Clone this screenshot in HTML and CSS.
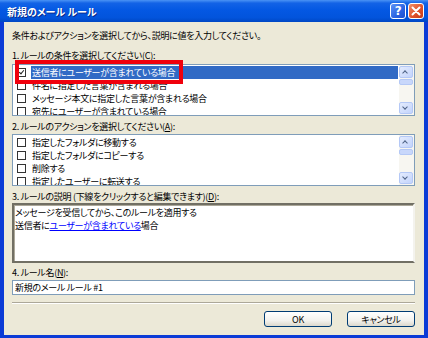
FILE: index.html
```html
<!doctype html>
<html lang="ja">
  <head>
    <meta charset="UTF-8" />
    <title>新規のメール ルール</title>
    <link rel="stylesheet" href="styles.css">
  </head>
  <body>
    <div class="window">
      <div class="titlebar">
        <span class="title">新規のメール ルール</span>
        <div class="title-buttons">
          <span class="tb-btn help">?</span>
          <span class="tb-btn close">
            <svg width="10" height="10" viewBox="0 0 10 10"><path d="M1.5 1.5 L8.5 8.5 M8.5 1.5 L1.5 8.5" stroke="#fff" stroke-width="2" stroke-linecap="round"/></svg>
          </span>
        </div>
      </div>
      <div class="client">
        <div class="intro">条件およびアクションを選択してから、説明に値を入力してください。</div>

        <div class="label label-1">1. ルールの条件を選択してください(<u>C</u>):</div>
        <div class="listbox">
          <ul class="items">
            <li class="selected"><span class="check checked"></span><span class="text">送信者にユーザーが含まれている場合</span></li>
            <li><span class="check"></span><span class="text">件名に指定した言葉が含まれる場合</span></li>
            <li><span class="check"></span><span class="text">メッセージ本文に指定した言葉が含まれる場合</span></li>
            <li><span class="check"></span><span class="text">宛先にユーザーが含まれている場合</span></li>
          </ul>
          <div class="scrollbar">
            <span class="sb-btn up"></span>
            <span class="sb-thumb"></span>
            <span class="sb-track"></span>
            <span class="sb-btn down"></span>
          </div>
          <div class="red-frame"></div>
        </div>

        <div class="label label-2">2. ルールのアクションを選択してください(<u>A</u>):</div>
        <div class="listbox">
          <ul class="items">
            <li><span class="check"></span><span class="text">指定したフォルダに移動する</span></li>
            <li><span class="check"></span><span class="text">指定したフォルダにコピーする</span></li>
            <li><span class="check"></span><span class="text">削除する</span></li>
            <li><span class="check"></span><span class="text">指定したユーザーに転送する</span></li>
          </ul>
          <div class="scrollbar">
            <span class="sb-btn up"></span>
            <span class="sb-thumb"></span>
            <span class="sb-track"></span>
            <span class="sb-btn down"></span>
          </div>
        </div>

        <div class="label label-3">3. ルールの説明 (下線をクリックすると編集できます)(<u>D</u>):</div>
        <div class="description">
          <div>メッセージを受信してから、このルールを適用する</div>
          <div>送信者に<a href="#" class="rule-link">ユーザーが含まれている</a>場合</div>
        </div>

        <div class="label label-4">4. ルール名(<u>N</u>):</div>
        <div class="name-input">新規のメール ルール #1</div>

        <div class="separator"></div>

        <div class="buttons">
          <span class="btn">OK</span>
          <span class="btn">キャンセル</span>
        </div>
      </div>
    </div>
  </body>
</html>
```

FILE: styles.css
```css
body {
  margin: 0;
  font-family: "Noto Sans CJK JP", "Noto Sans", sans-serif;
  font-size: 9px;
  font-feature-settings: "palt";
  letter-spacing: -0.3px;
  color: #000;
  background: #ece9d8;
}
.window {
  width: 428px;
  height: 338px;
  display: flex;
  flex-direction: column;
}
.titlebar {
  height: 22px;
  display: flex;
  align-items: center;
  justify-content: space-between;
  padding: 0 4px 0 7px;
  background: linear-gradient(to bottom, #4a93f5 0%, #1363e6 14%, #0458e3 45%, #0254dc 80%, #0047c4 100%);
}
.title {
  color: #fff;
  font-weight: bold;
  font-size: 10px;
  letter-spacing: 0;
  text-shadow: 1px 1px 0 #0a2a8a;
}
.title-buttons {
  display: flex;
  gap: 2px;
}
.tb-btn {
  width: 16px;
  height: 16px;
  box-sizing: border-box;
  border: 1px solid #fff;
  border-radius: 3px;
  display: flex;
  align-items: center;
  justify-content: center;
  color: #fff;
  font-family: "DejaVu Sans", sans-serif;
  font-weight: bold;
  font-size: 12px;
}
.help {
  background: linear-gradient(to bottom right, #5c93f7, #2a63e2 60%, #1b4fcf);
}
.close {
  background: linear-gradient(to bottom right, #f0906a, #e0532c 55%, #c43a18);
}
.client {
  flex: 1;
  background: #ece9d8;
  border: 4px solid #0b3bd6;
  border-top: none;
  border-bottom-width: 3px;
  padding: 7px 9px 0 8px;
}
.intro,
.label {
  line-height: 13px;
  white-space: nowrap;
}
.label-1 { margin: 7px 0 2px; }
.label-2 { margin: 4px 0 1px; }
.label-3 { margin: 4px 0 0; }
.label-4 { margin: 3px 0 1px; }
.listbox {
  position: relative;
  height: 52px;
  box-sizing: border-box;
  border: 1px solid #7f9db9;
  background: #fff;
  display: flex;
}
.items {
  flex: 1;
  list-style: none;
  margin: 0;
  padding: 1px 0 0;
  overflow: hidden;
}
.items li {
  height: 13px;
  display: flex;
  align-items: center;
  padding-left: 4px;
}
.check {
  width: 9px;
  height: 9px;
  box-sizing: border-box;
  border: 1px solid #333;
  background: #fff;
  margin-right: 5px;
  position: relative;
}
.check.checked::after {
  content: "";
  position: absolute;
  left: 2px;
  top: 0;
  width: 2px;
  height: 4px;
  border: solid #222;
  border-width: 0 1.5px 1.5px 0;
  transform: rotate(40deg);
}
.text {
  flex: 1;
  height: 13px;
  line-height: 13px;
  padding-left: 1px;
  margin-right: 1px;
  white-space: nowrap;
}
.selected .text {
  background: #316ac5;
  color: #fff;
}
.scrollbar {
  width: 14px;
  display: flex;
  flex-direction: column;
  padding: 1px 1px 1px 0;
  background: #f7f6f1;
}
.sb-btn {
  height: 12px;
  box-sizing: border-box;
  border: 1px solid #b4c8f6;
  border-radius: 2px;
  background: linear-gradient(to bottom right, #e3ebfd, #c3d4fc);
  position: relative;
}
.sb-btn::after {
  content: "";
  position: absolute;
  left: 3px;
  width: 3px;
  height: 3px;
  border: solid #4d6185;
  border-width: 1.5px 1.5px 0 0;
}
.sb-btn.up::after {
  top: 4px;
  transform: rotate(-45deg);
}
.sb-btn.down::after {
  top: 2px;
  transform: rotate(135deg);
}
.sb-thumb {
  height: 6px;
  margin-top: 1px;
  border-radius: 2px;
  background: #c8d7fb;
  border: 1px solid #b4c8f6;
  box-sizing: border-box;
}
.sb-track {
  flex: 1;
}
.red-frame {
  position: absolute;
  left: 2px;
  top: -5px;
  width: 168px;
  height: 24px;
  box-sizing: border-box;
  border: 4px solid #f0000c;
}
.description {
  height: 60px;
  box-sizing: border-box;
  background: #fff;
  border: 2px solid;
  border-color: #716f64 #f4f3ee #716f64 #716f64;
  box-shadow: inset 1px 1px 0 #aca899;
  padding: 1px 0 0 1px;
  line-height: 13px;
}
.rule-link {
  color: #0000ff;
}
.name-input {
  height: 15px;
  box-sizing: border-box;
  border: 1px solid #7f9db9;
  background: #fff;
  padding-left: 2px;
  line-height: 13px;
}
.separator {
  margin-top: 7px;
  border-top: 1px solid #aca899;
  border-bottom: 1px solid #fff;
}
.buttons {
  margin-top: 7px;
  display: flex;
  justify-content: flex-end;
  gap: 15px;
}
.btn {
  width: 68px;
  height: 16px;
  box-sizing: border-box;
  border: 1px solid #003c74;
  border-radius: 3px;
  background: linear-gradient(to bottom, #ffffff, #f3f2ee 60%, #dcd8cc);
  display: flex;
  align-items: center;
  justify-content: center;
}
```
